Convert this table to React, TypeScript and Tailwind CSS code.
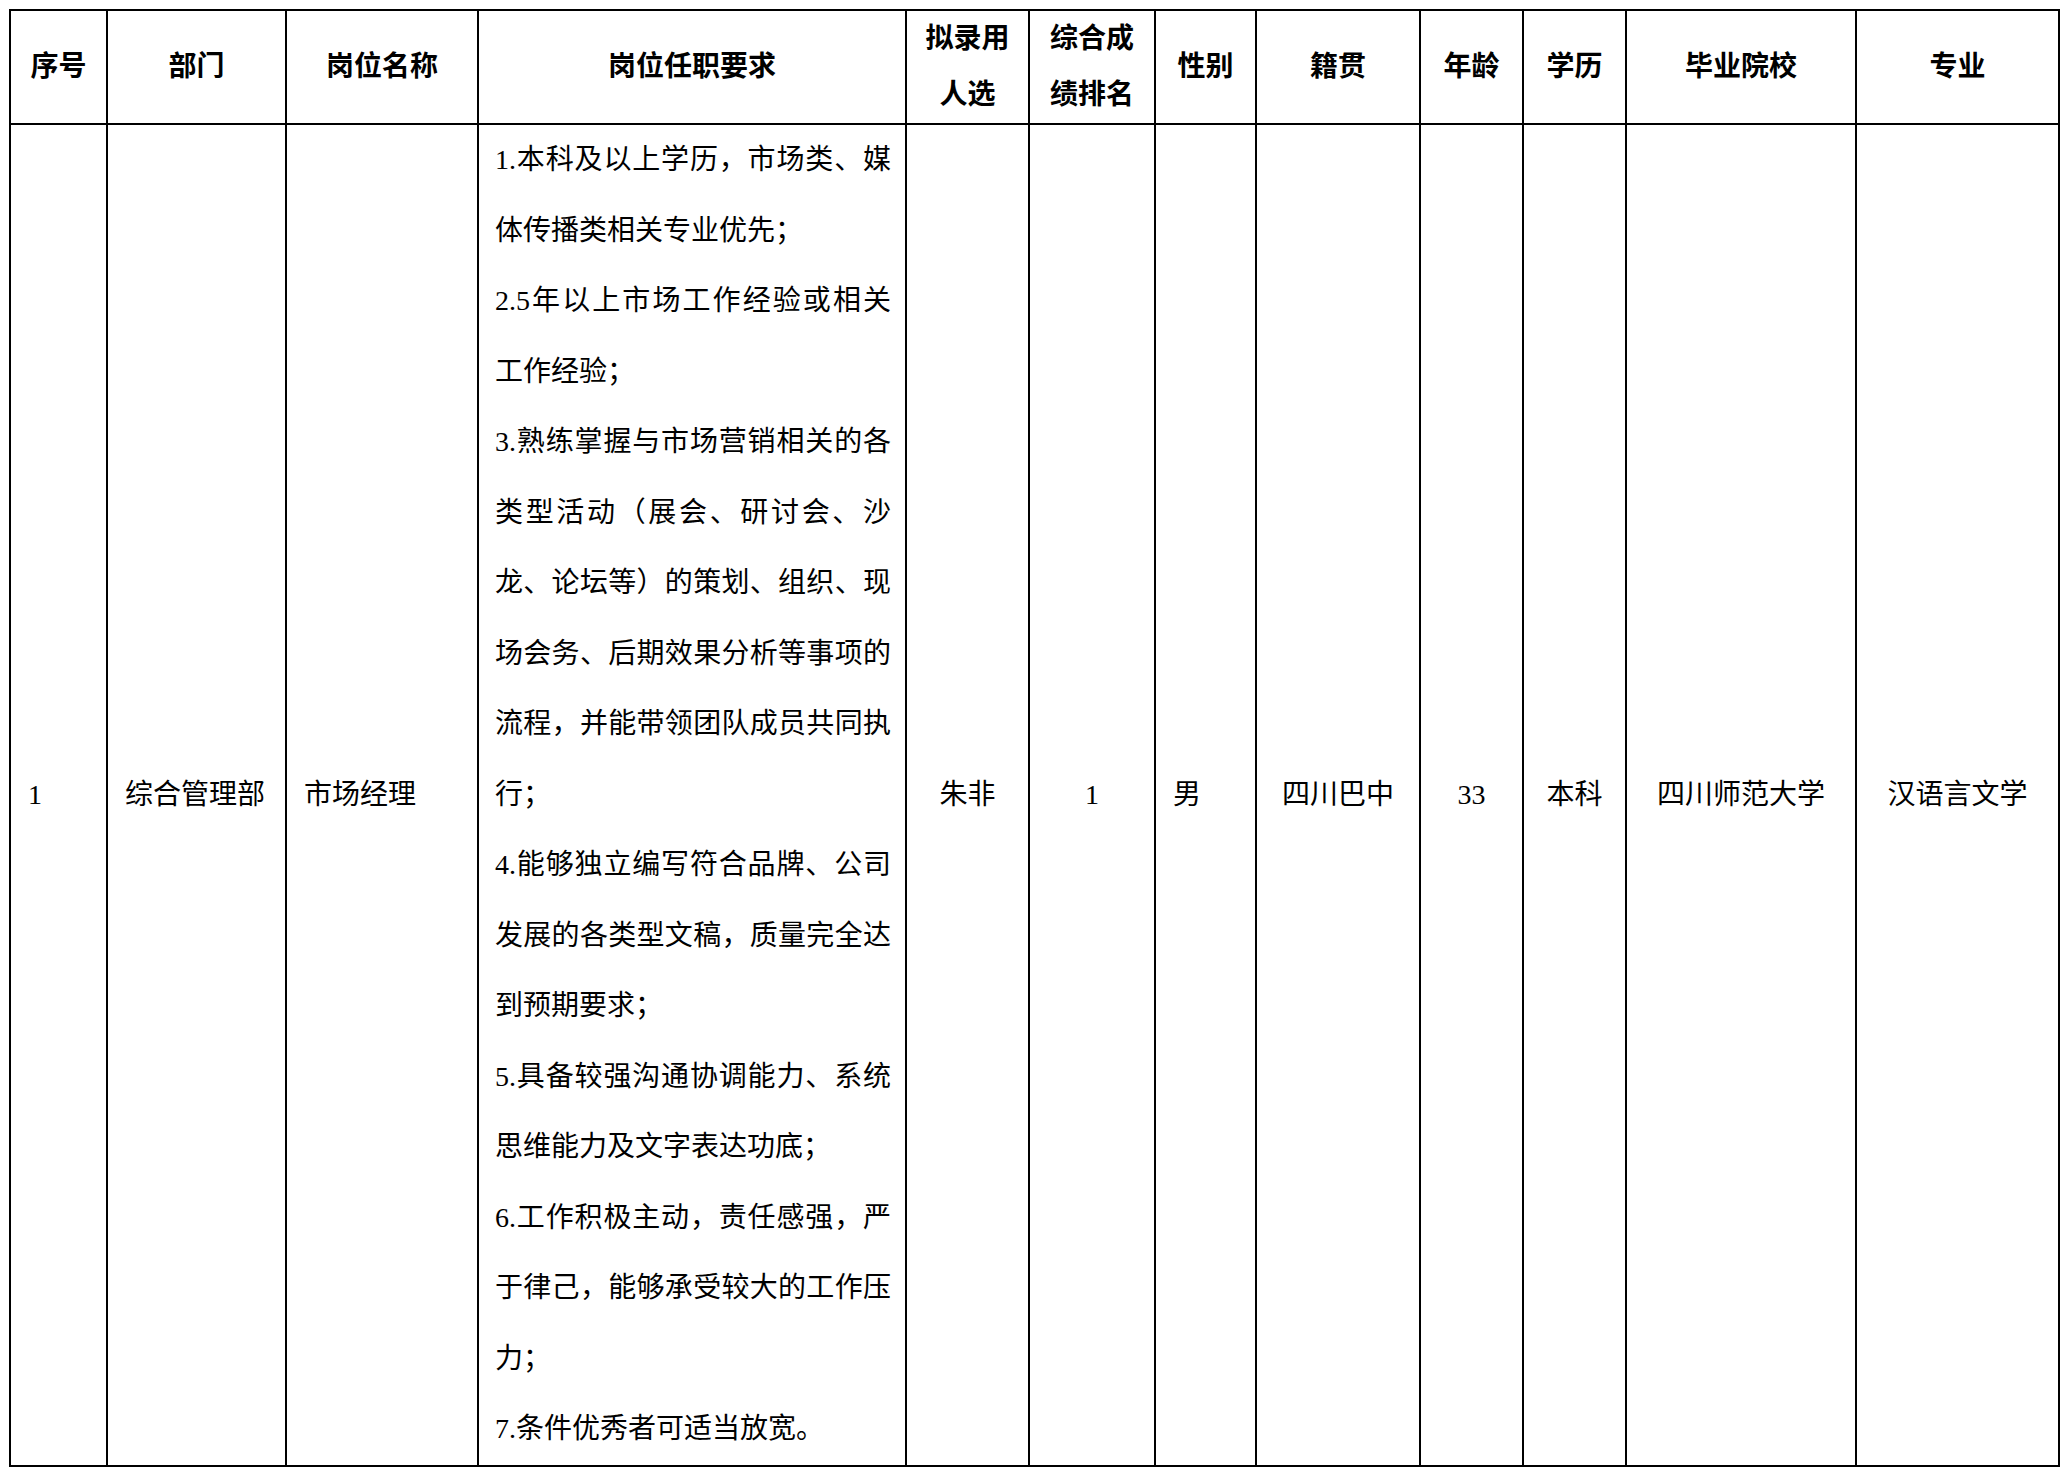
import type { ReactNode } from "react";

// 12 columns, widths measured from the ruled lines (2px each)
const GRID =
  "grid grid-cols-[95px_177px_190px_426px_121px_124px_99px_162px_101px_101px_228px_201px] gap-[2px] bg-black p-[2px] w-fit";

const headers: ReactNode[] = [
  "序号",
  "部门",
  "岗位名称",
  "岗位任职要求",
  <>
    拟录用
    <br />
    人选
  </>,
  <>
    综合成
    <br />
    绩排名
  </>,
  "性别",
  "籍贯",
  "年龄",
  "学历",
  "毕业院校",
  "专业",
];

// each visual line of the requirements cell; full = stretched to the right edge
const requirements: { text: string; full?: boolean }[] = [
  { text: "1.本科及以上学历，市场类、媒", full: true },
  { text: "体传播类相关专业优先；" },
  { text: "2.5年以上市场工作经验或相关", full: true },
  { text: "工作经验；" },
  { text: "3.熟练掌握与市场营销相关的各", full: true },
  { text: "类型活动（展会、研讨会、沙", full: true },
  { text: "龙、论坛等）的策划、组织、现", full: true },
  { text: "场会务、后期效果分析等事项的", full: true },
  { text: "流程，并能带领团队成员共同执", full: true },
  { text: "行；" },
  { text: "4.能够独立编写符合品牌、公司", full: true },
  { text: "发展的各类型文稿，质量完全达", full: true },
  { text: "到预期要求；" },
  { text: "5.具备较强沟通协调能力、系统", full: true },
  { text: "思维能力及文字表达功底；" },
  { text: "6.工作积极主动，责任感强，严", full: true },
  { text: "于律己，能够承受较大的工作压", full: true },
  { text: "力；" },
  { text: "7.条件优秀者可适当放宽。" },
];

function HeadCell({ children }: { children: ReactNode }) {
  return (
    <div className="bg-white flex items-center justify-center text-center font-semibold leading-[56px]">
      <span>{children}</span>
    </div>
  );
}

function Cell({ children, left }: { children: ReactNode; left?: boolean }) {
  return (
    <div
      className={
        left
          ? "bg-white flex items-center pl-[17px] pr-2"
          : "bg-white flex items-center justify-center text-center"
      }
    >
      <span>{children}</span>
    </div>
  );
}

export default function App() {
  return (
    <div className="min-h-screen bg-white pt-[9px] pl-[9px] text-black text-[28px] font-['Liberation_Serif','Noto_Sans_CJK_SC',serif]">
      <div className={GRID}>
        {headers.map((h, i) => (
          <HeadCell key={i}>{h}</HeadCell>
        ))}

        <Cell left>1</Cell>
        <Cell left>综合管理部</Cell>
        <Cell left>市场经理</Cell>
        <div className="bg-white pl-[16px] pr-[14px] leading-[70.5px]">
          {requirements.map((r, i) => (
            <div
              key={i}
              className={
                r.full
                  ? "whitespace-nowrap text-justify [text-align-last:justify]"
                  : "whitespace-nowrap"
              }
            >
              {r.text}
            </div>
          ))}
        </div>
        <Cell>朱非</Cell>
        <Cell>1</Cell>
        <Cell left>男</Cell>
        <Cell>四川巴中</Cell>
        <Cell>33</Cell>
        <Cell>本科</Cell>
        <Cell>四川师范大学</Cell>
        <Cell>汉语言文学</Cell>
      </div>
    </div>
  );
}
